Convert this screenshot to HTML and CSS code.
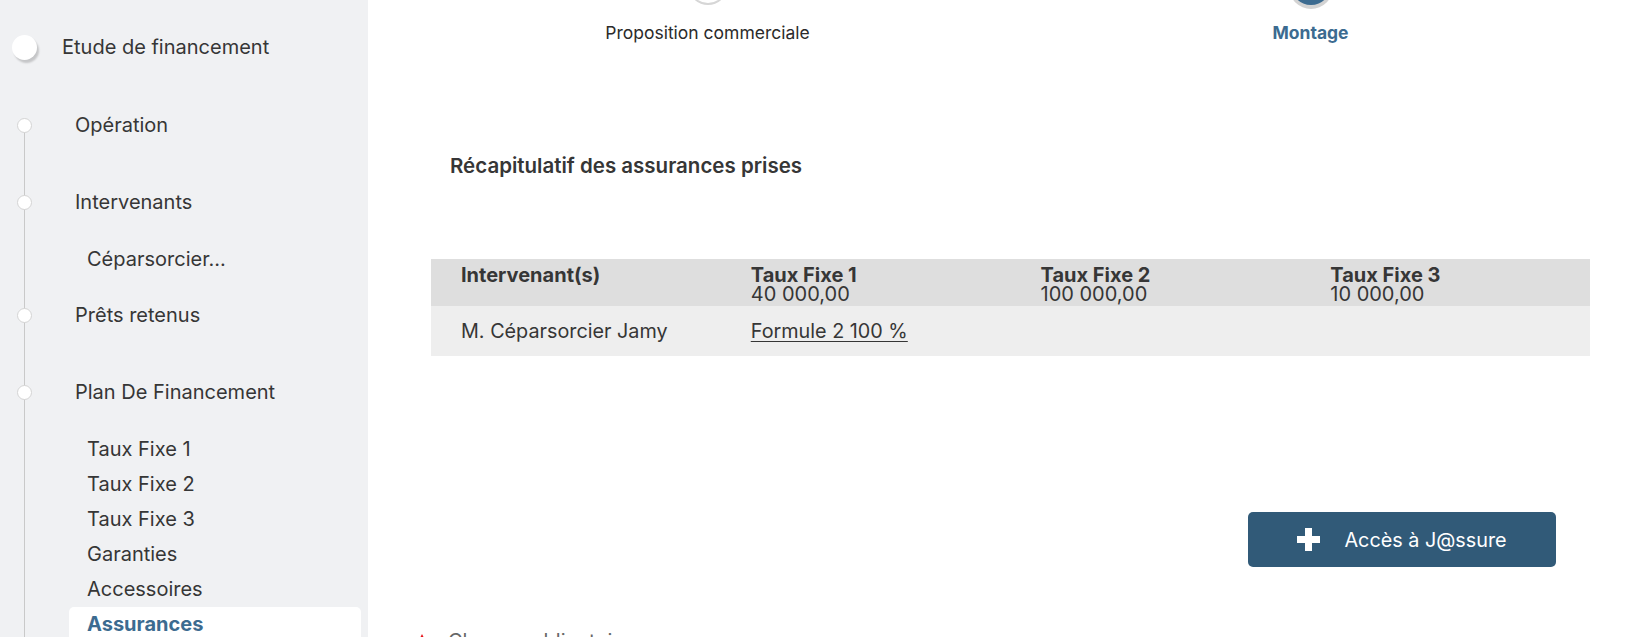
FILE: index.html
```html
<!DOCTYPE html>
<html lang="fr">
<head>
<meta charset="utf-8">
<title>Assurances</title>
<link rel="stylesheet" href="styles.css">
</head>
<body>
<div class="page">
  <aside class="sidebar">
    <div class="root-item">
      <span class="root-dot"></span>
      <span class="root-label">Etude de financement</span>
    </div>
    <div class="tree">
      <div class="node">
        <div class="node-row"><span class="dot"></span><span class="node-label">Opération</span></div>
      </div>
      <div class="node">
        <div class="node-row"><span class="dot"></span><span class="node-label">Intervenants</span></div>
        <ul class="sub">
          <li class="sub-item">Céparsorcier...</li>
        </ul>
      </div>
      <div class="node">
        <div class="node-row"><span class="dot"></span><span class="node-label">Prêts retenus</span></div>
      </div>
      <div class="node">
        <div class="node-row"><span class="dot"></span><span class="node-label">Plan De Financement</span></div>
        <ul class="sub">
          <li class="sub-item">Taux Fixe 1</li>
          <li class="sub-item">Taux Fixe 2</li>
          <li class="sub-item">Taux Fixe 3</li>
          <li class="sub-item">Garanties</li>
          <li class="sub-item">Accessoires</li>
          <li class="sub-item active">Assurances</li>
        </ul>
      </div>
    </div>
  </aside>
  <main class="main">
    <div class="stepper">
      <div class="step">
        <span class="step-dot"></span>
        <span class="step-label">Proposition commerciale</span>
      </div>
      <div class="step current">
        <span class="step-dot"></span>
        <span class="step-label">Montage</span>
      </div>
    </div>
    <div class="content">
      <h2 class="title">Récapitulatif des assurances prises</h2>
      <div class="table">
        <div class="thead">
          <div class="cell"><strong>Intervenant(s)</strong></div>
          <div class="cell"><strong>Taux Fixe 1</strong><span>40 000,00</span></div>
          <div class="cell"><strong>Taux Fixe 2</strong><span>100 000,00</span></div>
          <div class="cell"><strong>Taux Fixe 3</strong><span>10 000,00</span></div>
        </div>
        <div class="trow">
          <div class="cell">M. Céparsorcier Jamy</div>
          <div class="cell"><a class="formula" href="#">Formule 2 100 %</a></div>
          <div class="cell"></div>
          <div class="cell"></div>
        </div>
      </div>
      <div class="actions">
        <button class="btn" type="button">
          <svg class="plus" width="23" height="23" viewBox="0 0 23 23" aria-hidden="true"><path d="M8 0h7v8h8v7h-8v8H8v-8H0V8h8z" fill="#fff"/></svg>
          <span>Accès à J@ssure</span>
        </button>
      </div>
      <div class="required">
        <svg class="req-mark" width="8" height="8" viewBox="0 0 8 8" aria-hidden="true"><path d="M4 0L8 8H0z" fill="#e8141b"/></svg>
        <span>Champs obligatoires</span>
      </div>
    </div>
  </main>
</div>
</body>
</html>
```
FILE: styles.css
```css
* { box-sizing: border-box; }
html, body {
  margin: 0;
  padding: 0;
  height: 637px;
  overflow: hidden;
  background: #ffffff;
}
body {
  font-family: Inter, "Open Sans", "Liberation Sans", sans-serif;
  color: #363636;
}
.page {
  display: flex;
  height: 637px;
}

/* Sidebar */
.sidebar {
  width: 368px;
  flex: 0 0 368px;
  background: #f0f1f3;
  padding: 35px 7px 0 0;
}
.root-item {
  display: flex;
  align-items: center;
  height: 24px;
  margin-bottom: 29px;
}
.root-dot {
  width: 25px;
  height: 25px;
  border-radius: 50%;
  background: #ffffff;
  box-shadow: 2px 3px 2px rgba(0, 0, 0, 0.18);
  margin-left: 12px;
  margin-right: 25px;
}
.root-label {
  font-size: 20px;
  line-height: 24px;
}
.tree {
  position: relative;
}
.tree::before {
  content: "";
  position: absolute;
  left: 24px;
  top: 37px;
  bottom: -60px;
  width: 1px;
  background: #c9c9c9;
}
.node-row {
  position: relative;
  display: flex;
  align-items: center;
  padding: 25px 0 27px 17px;
}
.node + .node .node-row {
  padding-top: 26px;
}
.dot {
  width: 15px;
  height: 15px;
  border-radius: 50%;
  background: #ffffff;
  border: 1px solid #d4d4d4;
  margin-right: 43px;
}
.node-label {
  font-size: 20px;
  line-height: 24px;
}
.sub {
  list-style: none;
  margin: 0;
  padding: 1px 0 0 69px;
}
.sub-item {
  font-size: 20px;
  line-height: 35px;
  padding-left: 18px;
  border-radius: 5px;
}
.sub-item.active {
  background: #ffffff;
  font-weight: 700;
  color: #3c6b90;
}

/* Main */
.main {
  flex: 1;
  min-width: 0;
}
.stepper {
  display: grid;
  grid-template-columns: 1fr 1fr;
  width: 1206px;
  margin: -35px 0 0 38px;
}
.step {
  display: flex;
  flex-direction: column;
  align-items: center;
}
.step-dot {
  width: 40px;
  height: 40px;
  border-radius: 50%;
  background: #ffffff;
  border: 2px solid #d6d6d6;
}
.step.current .step-dot {
  background: #3c6b90;
  border: none;
  box-shadow: 0 2px 0 2px #d3d3d3;
}
.step-label {
  margin-top: 18px;
  font-size: 17.5px;
  line-height: 20px;
  color: #2b2b2b;
}
.step.current .step-label {
  font-weight: 700;
  color: #3c6b90;
}

.content {
  padding: 0 36px 0 63px;
}
.title {
  margin: 111px 0 0 19px;
  font-size: 20.5px;
  line-height: 24px;
  font-weight: 600;
  color: #363636;
}
.table {
  margin-top: 81px;
}
.thead, .trow {
  display: grid;
  grid-template-columns: repeat(4, 1fr);
}
.thead {
  background: #dedede;
  height: 47px;
  padding-top: 7px;
  font-size: 20px;
  line-height: 19px;
}
.thead .cell {
  display: flex;
  flex-direction: column;
}
.thead strong {
  font-weight: 700;
}
.cell {
  padding-left: 30px;
}
.trow {
  background: #eeeeee;
  height: 50px;
  align-items: center;
  font-size: 19.8px;
  line-height: 24px;
}
.formula {
  color: #363636;
  text-decoration: underline;
  text-underline-offset: 3px;
}
.actions {
  display: flex;
  justify-content: flex-end;
  margin-top: 156px;
  padding-right: 34px;
}
.btn {
  display: flex;
  align-items: center;
  justify-content: center;
  gap: 24px;
  width: 308px;
  height: 55px;
  border: none;
  border-radius: 5px;
  background: #315a78;
  color: #ffffff;
  font-family: inherit;
  font-size: 19.8px;
}
.required {
  display: flex;
  align-items: flex-start;
  gap: 22px;
  margin: 62px 0 0 -13px;
  font-size: 20px;
  line-height: 24px;
  color: #666666;
}
.req-mark {
  margin-top: 5px;
}
```
